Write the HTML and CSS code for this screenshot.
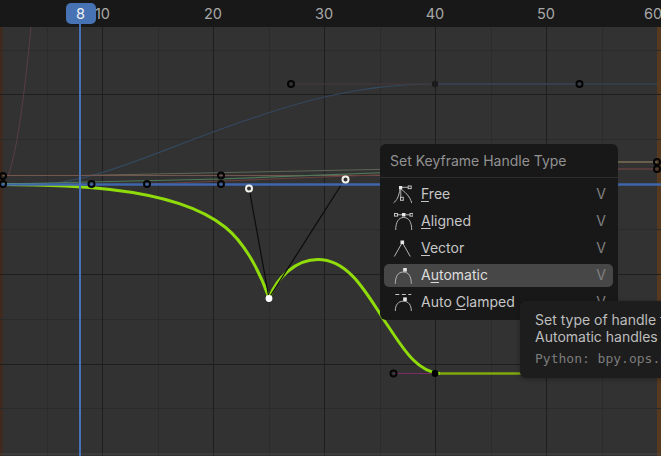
FILE: index.html
```html
<!DOCTYPE html>
<html lang="en">
<head>
<meta charset="utf-8">
<title>Graph Editor</title>
<link rel="stylesheet" href="styles.css">
</head>
<body>
<div class="editor">
  <svg class="graph" width="661" height="456" viewBox="0 0 661 456" xmlns="http://www.w3.org/2000/svg">
    <rect class="bg" x="0" y="0" width="661" height="456"/>
    <rect class="range-l" x="0" y="27" width="3" height="429"/>
    <rect class="range-r" x="657" y="27" width="4" height="429"/>
    <path class="grid-minor" d="M47.500 27V456M158.500 27V456M269.500 27V456M380.500 27V456M491.500 27V456M602.500 27V456M0 50.500H661M0 139.500H661M0 229.500H661M0 319.500H661M0 408.500H661"/>
    <path class="grid-major" d="M102.500 27V456M213.500 27V456M324.500 27V456M435.500 27V456M546.500 27V456M0 94.500H661M0 274.500H661M0 364.500H661"/>
    <path class="grid-edge" d="M0 454H661"/>

    <path class="curve-red" d="M8 176C18 150 26 80 31 27"/>
    <path class="curve-blue-f" d="M40 184C90 183 150 155 213 132C300 100 360 84 435 84H657"/>
    <path class="handle-red" d="M291 84H435"/>
    <path class="handle-blue" d="M435 84H579"/>
    <path class="line-tan" d="M80 175.500L400 169"/>
    <path class="line-red" d="M3 175.500H380"/>
    <path class="line-green" d="M3 184L220 179L400 172"/>
    <path class="line-red2" d="M147 184L400 174"/>
    <path class="line-red3" d="M618 169H657"/>
    <path class="line-tan2" d="M618 162H657"/>

    <path class="handle-pink" d="M394 373.500H435"/>
    <path class="curve-active" d="M3 184.500C50 185 80 186 110 189.500C150 194 195 203 225 227C245 243 260 272 269 298C277 278 295 259.500 318 259.500C350 259.500 368 296 386 323C400 343 415 372 440 373.500"/>
    <path class="curve-flat" d="M440 373.500H525"/>
    <path class="active-handle" d="M249 188L269 298L345 179"/>
    <path class="line-blue" d="M0 184.500H661"/>

    <g class="key">
      <circle cx="3" cy="176" r="3"/><circle cx="3" cy="184" r="3"/>
      <circle cx="91.500" cy="184" r="3"/><circle cx="147" cy="184" r="3"/>
      <circle cx="221" cy="175.500" r="3"/><circle cx="221" cy="184" r="3"/>
      <circle cx="291" cy="84" r="3"/><circle cx="579.500" cy="84" r="3"/>
      <circle cx="393.500" cy="373.500" r="3"/>
      <circle cx="657" cy="162" r="3"/><circle cx="657" cy="169" r="3"/>
    </g>
    <circle class="key-solid" cx="435" cy="84" r="3.200"/>
    <circle class="key-black" cx="435" cy="373.500" r="3.400"/>
    <circle class="key-sel" cx="249" cy="188.500" r="3"/>
    <circle class="key-sel" cx="345.500" cy="179.500" r="3"/>
    <circle class="key-white" cx="269" cy="298.500" r="3.400"/>

    <rect class="ruler" x="0" y="0" width="661" height="27"/>
    <g class="ticks">
      <text x="102.500" y="19">10</text><text x="213" y="19">20</text><text x="324" y="19">30</text>
      <text x="435" y="19">40</text><text x="546" y="19">50</text><text x="653" y="19">60</text>
    </g>
    <path class="playhead" d="M80 20V456"/>
    <rect class="frame-badge" x="66" y="3" width="30" height="21" rx="5"/>
    <text class="frame-num" x="80.500" y="19">8</text>
  </svg>

  <div class="menu">
    <div class="menu-title">Set Keyframe Handle Type</div>
    <ul class="menu-list">
      <li class="menu-item">
        <svg class="ico" viewBox="0 0 20 20"><path class="s" d="M0.500 18C3.500 15.500 6 12 7 3.500C11 6 17 11 18.700 18M7.800 3V13M9 2.300H15"/><rect class="f" x="6" y="1" width="3.200" height="3.200"/><rect class="o" x="15.200" y="1" width="3" height="2.600"/><rect class="o" x="7.500" y="12.300" width="2.800" height="3"/></svg>
        <span class="label"><u>F</u>ree</span><span class="key-hint">V</span>
      </li>
      <li class="menu-item">
        <svg class="ico" viewBox="0 0 20 20"><path class="s" d="M2.700 18C2.700 10 5.500 5.500 10.700 5.500C15.900 5.500 18.700 10 18.700 18M4.500 2.800H9M12.500 2.800H17"/><rect class="f" x="9" y="1" width="3.500" height="3.500"/><rect class="o" x="1.500" y="1.500" width="3" height="2.600"/><rect class="o" x="17" y="1.500" width="3" height="2.600"/></svg>
        <span class="label"><u>A</u>ligned</span><span class="key-hint">V</span>
      </li>
      <li class="menu-item">
        <svg class="ico" viewBox="0 0 20 20"><path class="s" d="M1.300 17.500L9.300 3.500L17.300 17.500"/><rect class="f" x="7.500" y="1.500" width="3.600" height="3.600"/></svg>
        <span class="label"><u>V</u>ector</span><span class="key-hint">V</span>
      </li>
      <li class="menu-item is-hover">
        <svg class="ico" viewBox="0 0 20 20"><path class="s" d="M2.300 17.800C2.300 10.500 5 6 10.300 6C15.600 6 18.300 10.500 18.300 17.800"/><rect class="f" x="10.200" y="2" width="3.600" height="3.600"/></svg>
        <span class="label">A<u>u</u>tomatic</span><span class="key-hint">V</span>
      </li>
      <li class="menu-item">
        <svg class="ico" viewBox="0 0 20 20"><path class="s" d="M2.300 18C2.300 12 5 8.200 10.300 8.200C15.600 8.200 18.300 12 18.300 18"/><path class="d" d="M2.300 1.500H18.300"/><rect class="f" x="10.200" y="4.400" width="3.600" height="3.600"/></svg>
        <span class="label">Auto <u>C</u>lamped</span><span class="key-hint">V</span>
      </li>
    </ul>
  </div>

  <div class="tooltip">
    <div class="tip-line">Set type of handle for selected keyframes</div>
    <div class="tip-line">Automatic handles that create smooth curves</div>
    <div class="tip-py">Python: bpy.ops.graph.handle_type(type='AUTO')</div>
  </div>
</div>
</body>
</html>
```
FILE: styles.css
```css
html, body {
  margin: 0;
  padding: 0;
  background: #303030;
}
.editor {
  position: relative;
  width: 661px;
  height: 456px;
  overflow: hidden;
  font-family: Inter, "Noto Sans", sans-serif;
}
.graph { display: block; }
.graph path { fill: none; }
.bg { fill: #323232; }
.range-l { fill: #3f2a1f; }
.range-r { fill: #57391f; }
.ruler { fill: #181818; }
.grid-minor { stroke: #2b2b2b; stroke-width: 1; }
.grid-major { stroke: #1e1e1e; stroke-width: 1; }
.grid-edge { stroke: #444; stroke-width: 1; }
.curve-red { stroke: #5a3d44; stroke-width: 1; }
.curve-blue-f { stroke: #34485e; stroke-width: 1.200; }
.handle-red { stroke: #47363a; stroke-width: 1; }
.handle-blue { stroke: #3c4354; stroke-width: 1; }
.line-tan { stroke: #5f6657; stroke-width: 1; }
.line-red { stroke: #75564f; stroke-width: 1; }
.line-green { stroke: #4f7a5a; stroke-width: 1.200; }
.line-red2 { stroke: #6a3f3f; stroke-width: 1; }
.line-red3 { stroke: #7a4444; stroke-width: 1; }
.line-tan2 { stroke: #a08a60; stroke-width: 1; }
.line-blue { stroke: #3f66ad; stroke-width: 2.500; }
.handle-pink { stroke: #7b2a62; stroke-width: 1; }
.active-handle { stroke: #0c0c0c; stroke-width: 1.200; }
.curve-active { stroke: #8fdc0a; stroke-width: 3; }
.curve-flat { stroke: #7fa80e; stroke-width: 2.400; }
.key circle { fill: none; stroke: #050505; stroke-width: 2; }
.key-solid { fill: #1b1b1b; }
.key-black { fill: #000; }
.key-sel { fill: #323232; stroke: #f2f2ea; stroke-width: 2; }
.key-white { fill: #fff; }
.ticks text {
  fill: #a8a8a8;
  font-size: 14.500px;
  text-anchor: middle;
}
.playhead { stroke: #4772b3; stroke-width: 2; }
.frame-badge { fill: #4772b3; }
.frame-num {
  fill: #f2f2f2;
  font-size: 14.500px;
  text-anchor: middle;
}
.menu {
  position: absolute;
  left: 380px;
  top: 144px;
  width: 238px;
  height: 176px;
  box-sizing: border-box;
  padding-top: 7px;
  background: #181818;
  border-radius: 6px;
}
.menu-title {
  height: 26px;
  padding-left: 10px;
  font-size: 14px;
  line-height: 20px;
  color: #929292;
  border-bottom: 1px solid #2e2e2e;
}
.menu-list {
  list-style: none;
  margin: 5px 0 0;
  padding: 0 5px 0 4px;
}
.menu-item {
  display: flex;
  align-items: center;
  height: 23px;
  margin-bottom: 4px;
  padding: 0 7px 0 9px;
  border-radius: 5px;
  color: #c6c6c6;
  font-size: 14px;
}
.menu-item.is-hover {
  background: #474747;
  color: #dedede;
}
.ico {
  flex: none;
  width: 20px;
  height: 20px;
  margin-right: 8px;
}
.ico .s { fill: none; stroke: #b4b4b4; stroke-width: 1; }
.ico .d { fill: none; stroke: #c4c4c4; stroke-width: 1; stroke-dasharray: 4 2.500; }
.ico .f { fill: #e8e8e8; }
.ico .o { fill: #181818; stroke: #c4c4c4; stroke-width: 1; }
.label { flex: 1; white-space: nowrap; padding-bottom: 2px; }
.label u { text-underline-offset: 2px; text-decoration-thickness: 1px; }
.key-hint { color: #808080; padding-bottom: 2px; }
.tooltip {
  position: absolute;
  left: 520px;
  top: 301px;
  width: 340px;
  height: 77px;
  box-sizing: border-box;
  padding: 10px 0 0 15px;
  background: #1d1d1d;
  border-radius: 6px;
  box-shadow: 0 1px 5px rgba(0, 0, 0, 0.3);
  white-space: nowrap;
}
.tip-line {
  font-size: 14px;
  line-height: 17px;
  color: #bebebe;
}
.tip-py {
  margin-top: 5px;
  font-family: "DejaVu Sans Mono", monospace;
  font-size: 13px;
  line-height: 17px;
  color: #7c7c7c;
}
```
